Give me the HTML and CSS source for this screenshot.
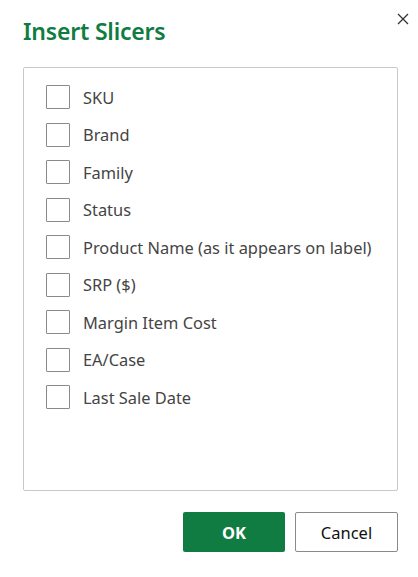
FILE: index.html
```html
<!DOCTYPE html>
<html>
<head>
<meta charset="utf-8">
<link rel="stylesheet" href="styles.css">
</head>
<body>
<div class="dialog">
  <div class="header">
    <h1 class="title">Insert Slicers</h1>
    <button class="close" aria-label="Close">
      <svg width="12" height="12" viewBox="0 0 12 12"><path d="M1 1L11 11M11 1L1 11" stroke="#333" stroke-width="1.3" fill="none"/></svg>
    </button>
  </div>
  <div class="list">
    <label class="item"><span class="box"></span><span class="label">SKU</span></label>
    <label class="item"><span class="box"></span><span class="label">Brand</span></label>
    <label class="item"><span class="box"></span><span class="label">Family</span></label>
    <label class="item"><span class="box"></span><span class="label">Status</span></label>
    <label class="item"><span class="box"></span><span class="label">Product Name (as it appears on label)</span></label>
    <label class="item"><span class="box"></span><span class="label">SRP ($)</span></label>
    <label class="item"><span class="box"></span><span class="label">Margin Item Cost</span></label>
    <label class="item"><span class="box"></span><span class="label">EA/Case</span></label>
    <label class="item"><span class="box"></span><span class="label">Last Sale Date</span></label>
  </div>
  <div class="footer">
    <button class="btn primary">OK</button>
    <button class="btn secondary">Cancel</button>
  </div>
</div>
</body>
</html>
```
FILE: styles.css
```css
* { box-sizing: border-box; }
html, body { margin: 0; padding: 0; background: #fff; }
body { font-family: "Noto Sans", "Open Sans", sans-serif; width: 418px; height: 577px; overflow: hidden; }
.dialog { padding: 0 20px 0 23px; }
.header { display: flex; justify-content: space-between; align-items: flex-start; height: 67px; }
.title { margin: 16px 0 0 0; font-size: 23px; font-weight: 600; color: #107c41; line-height: 30px; letter-spacing: -0.2px; }
.close { background: none; border: 0; padding: 0; margin: 13px -11px 0 0; width: 12px; height: 12px; display: flex; }
.list { width: 375px; height: 424px; border: 1px solid #c8c8c8; border-radius: 2px; padding: 17px 22px; display: flex; flex-direction: column; gap: 13.5px; }
.item { display: flex; align-items: center; gap: 13px; height: 24px; }
.box { width: 24px; height: 24px; border: 1px solid #8a8a8a; border-radius: 1px; flex: none; }
.label { font-size: 16.4px; color: #444; white-space: nowrap; }
.footer { display: flex; justify-content: flex-end; gap: 10px; margin-top: 21px; width: 375px; }
.btn { width: 103px; height: 40px; border-radius: 2px; font-family: inherit; font-size: 16.5px; cursor: pointer; }
.primary { background: #107c41; color: #fff; border: 0; font-weight: 700; width: 102px; }
.secondary { background: #fff; color: #111; border: 1px solid #8a8a8a; }
```
